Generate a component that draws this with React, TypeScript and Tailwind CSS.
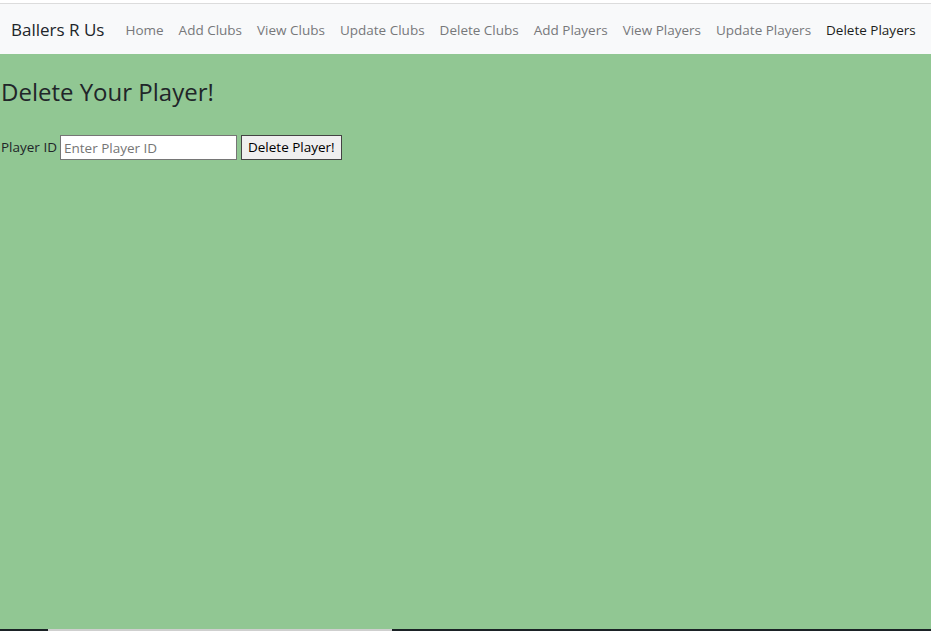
export default function App() {
  const links = [
    "Home",
    "Add Clubs",
    "View Clubs",
    "Update Clubs",
    "Delete Clubs",
    "Add Players",
    "View Players",
    "Update Players",
  ]

  return (
    <div className="h-[631px] flex flex-col bg-white font-['Open_Sans',sans-serif] overflow-hidden">
      <div className="h-[3px] bg-white" />
      <nav className="h-[51px] shrink-0 flex items-center bg-[#f8f9fa] border-t border-[#dcdcdc] pl-[11px] pt-[2px]">
        <span className="text-[17px] text-[#212529] mr-[21px]">Ballers R Us</span>
        <ul className="flex items-center gap-[15px] text-[13.5px]">
          {links.map((l) => (
            <li key={l} className="text-[#77787a]">{l}</li>
          ))}
          <li className="text-[#1d1f21]">Delete Players</li>
        </ul>
      </nav>
      <main className="flex-1 bg-[#91c793] text-[#212529]">
        <h3 className="text-[24px] font-medium mt-[23px] ml-[1px] leading-tight">Delete Your Player!</h3>
        <form className="flex items-center mt-[28px] text-[13.5px]">
          <label className="ml-[1px] mr-[3px]">Player ID</label>
          <input
            placeholder="Enter Player ID"
            className="w-[177px] h-[25px] bg-white border border-[#767676] px-[3px] text-[13.5px] placeholder:text-[#757575] outline-none"
          />
          <button className="ml-[4px] h-[25px] px-[6px] bg-[#efefef] border border-[#444] text-black text-[13.5px]">
            Delete Player!
          </button>
        </form>
      </main>
      <div className="h-[2px] shrink-0 flex bg-[#1b2226]">
        <div className="w-[48px]" />
        <div className="w-[344px] bg-[#cfcfcf]" />
      </div>
    </div>
  )
}
